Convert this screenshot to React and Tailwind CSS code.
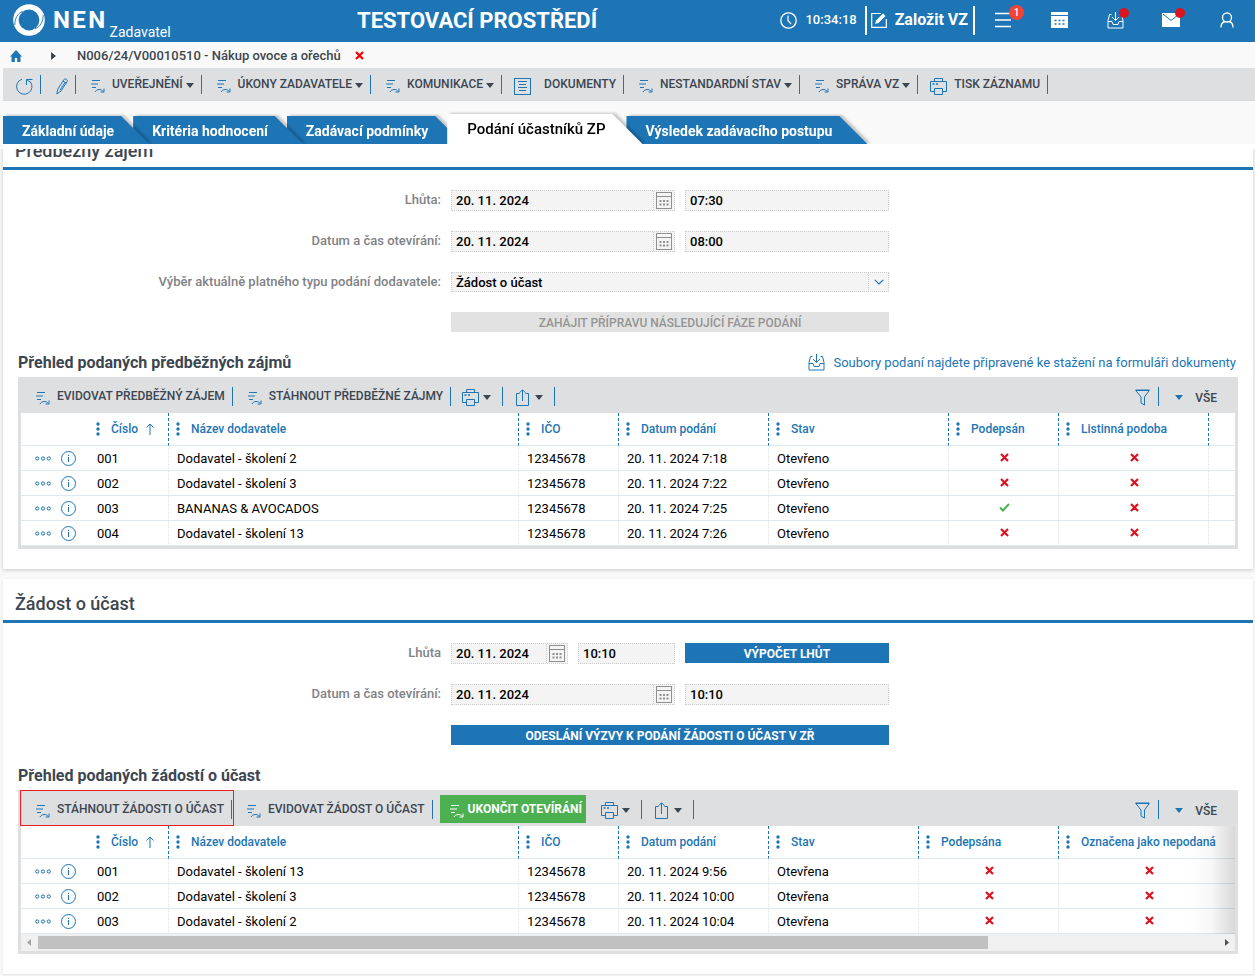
import { clsx } from 'clsx';

const stroke = { fill: 'none', stroke: 'currentColor' };

const Logo = () => (
  <svg className="w-8 h-8" viewBox="0 0 32 32">
    <circle cx="16" cy="16" r="15.8" fill="#fff" />
    <circle cx="16" cy="16" r="10.4" fill="#1d75b5" />
    <path d="M1.8 21C1.8 14.5 4.5 9.5 10 7" fill="none" stroke="#1d75b5" strokeWidth=".9" />
    <path d="M30.2 11C30.2 17.5 27.5 22.5 22 25" fill="none" stroke="#1d75b5" strokeWidth=".9" />
  </svg>
);

const ActionIcon = () => (
  <svg className="w-[14px] h-[14px] shrink-0" viewBox="0 0 14 14" {...stroke}>
    <path d="M1 1.5h8M0 5h7M1 8.5h4" />
    <path d="M4 13c1.5-3 6.5-3.4 8.2-.6" />
    <path d="M13 9.5v3.5H9.5" />
  </svg>
);

const PrinterIcon = () => (
  <svg className="w-[17px] h-[17px] shrink-0" viewBox="0 0 17 17" {...stroke}>
    <path d="M4.5 3.5v-3h8v3M4.5 13.5h-4v-10h16v10h-4" />
    <path d="M4.5 10.5h8v6h-8z" />
    <path d="M2.5 6h2M6 6h2" strokeWidth="1.6" />
  </svg>
);

const ShareIcon = () => (
  <svg className="w-[17px] h-[17px] shrink-0" viewBox="0 0 17 17" {...stroke}>
    <path d="M5.5 4.5h-3v12h12v-12h-3M8.5 12V1M5.5 3.8l3-3 3 3" />
  </svg>
);

const FilterIcon = () => (
  <svg className="w-[15px] h-[17px]" viewBox="0 0 15 17" {...stroke}>
    <path d="M.8 1.5h13.4L9.5 8v8L6 14V8z" />
    <path d="M.5 1h14" />
  </svg>
);

const RefreshIcon = () => (
  <svg className="w-[17px] h-[17px]" viewBox="0 0 17 17" {...stroke}>
    <path d="M6 1.2A7.7 7.7 0 1 0 14 3.4" />
    <path d="M16.500 1.500h-6V7M10.500 1.500l3.500 2.500" />
  </svg>
);

const PencilIcon = () => (
  <svg className="w-3 h-[17px]" viewBox="0 0 12 17" {...stroke}>
    <path d="M.8 16l1-5L8 1.5c1-1.4 4 .2 3.2 2L5 13z" />
    <path d="M9 4.5L4 12.2M7 3l3.2 2" />
  </svg>
);

const DocIcon = () => (
  <svg className="w-[17px] h-[17px] shrink-0" viewBox="0 0 17 17" {...stroke}>
    <rect x=".5" y=".5" width="16" height="16" />
    <path d="M4 3.5h9M5 6.5h7M4 9.5h9M5 12.5h7" />
  </svg>
);

const TrayIcon = () => (
  <svg className="w-[17px] h-[17px] shrink-0" viewBox="0 0 17 17" {...stroke}>
    <path d="M4.5 2.5h-2l-1.500 6v7.500h15V8.500l-1.500-6h-2" />
    <path d="M1 9.500h4l1 3h5l1-3h4" />
    <path d="M8.500 0v8M5 5l3.500 3.500L12 5" />
  </svg>
);

const CalendarIcon = () => (
  <svg className="w-4 h-[17px]" viewBox="0 0 16 17" {...stroke}>
    <rect x=".5" y=".5" width="15" height="16" />
    <path d="M0 4.500h16" />
    <path d="M3.500 9h9M3.500 12.500h9" strokeWidth="1.800" strokeDasharray="2 1.500" />
  </svg>
);

const Caret = ({ className = 'text-[#3c4650]' }) => (
  <svg className={clsx('w-2 h-[5px] shrink-0', className)} viewBox="0 0 8 5" fill="currentColor">
    <path d="M0 0h8L4 5z" />
  </svg>
);

const Cross = ({ className }) => (
  <svg className={clsx('w-[9px] h-[9px]', className)} viewBox="0 0 9 9" {...stroke}>
    <path d="M1 1l7 7M8 1L1 8" strokeWidth="2.200" />
  </svg>
);

const Check = ({ className }) => (
  <svg className={clsx('w-[11px] h-[9px]', className)} viewBox="0 0 11 9" {...stroke}>
    <path d="M1 4.500l3 3L10 1" strokeWidth="2" />
  </svg>
);

const Dots = () => (
  <svg className="w-1 h-[14px] shrink-0" viewBox="0 0 4 14" fill="currentColor">
    <circle cx="2" cy="2" r="1.700" />
    <circle cx="2" cy="7" r="1.700" />
    <circle cx="2" cy="12" r="1.700" />
  </svg>
);

const Separator = () => <span className="w-px h-[19px] bg-[#1d75b5]" />;

const ToolItem = ({ icon, label, caret, highlight, wide, labelGap = 'pl-[7px]' }) => (
  <div className="relative flex items-center h-full">
    <button
      className={clsx(
        'flex items-center h-full pr-[7px] text-[#1d75b5]',
        wide ? 'pl-3' : 'pl-[15px]'
      )}
      aria-label={label || 'Nástroj'}
    >
      <span className="pt-1">{icon}</span>
      {label && (
        <span className={clsx('text-xs font-medium text-[#3c4650] whitespace-nowrap', labelGap)}>
          {label}
        </span>
      )}
      {caret && <span className="pl-[3px] pt-[3px]"><Caret /></span>}
    </button>
    <Separator />
    {highlight && (
      <span className="absolute -top-[2px] bottom-0 -left-px -right-[2px] border border-[#ed1c24] pointer-events-none" />
    )}
  </div>
);

const IconTool = ({ icon, label, caret }) => (
  <div className="flex items-center h-full">
    <button className="flex items-center gap-1 h-full px-[11px] pt-[2px] text-[#1d75b5]" aria-label={label}>
      {icon}
      {caret && <Caret />}
    </button>
    <Separator />
  </div>
);

const Header = () => (
  <header className="flex items-center h-[42px] pb-[2px] bg-[#1d75b5] text-white">
    <a href="#" className="flex items-center w-[357px] h-full pl-[13px]">
      <Logo />
      <span className="pl-2 text-2xl font-bold tracking-widest">NEN</span>
      <span className="self-end pl-[2px] text-sm leading-4">Zadavatel</span>
    </a>
    <span className="text-[22px] font-bold whitespace-nowrap">TESTOVACÍ PROSTŘEDÍ</span>
    <div className="flex items-center ml-auto">
      <svg className="w-[17px] h-[17px]" viewBox="0 0 17 17" {...stroke}>
        <circle cx="8.500" cy="8.500" r="7.700" strokeWidth="1.300" />
        <path d="M8 3.500v5l3 3.500" strokeWidth="1.200" />
      </svg>
      <time className="px-2 text-[13px] font-medium">10:34:18</time>
      <button className="flex items-center h-[29px] pl-1 pr-[5px] gap-2 border-x-2 border-white text-base font-bold whitespace-nowrap">
        <svg className="w-4 h-4" viewBox="0 0 16 16" {...stroke}>
          <path d="M10 1.500H.7v13.800h14.600V7" strokeWidth="1.200" />
          <path d="M4 12l1-3.500L12 1.500l2.500 2.500-7 7z" fill="currentColor" stroke="none" />
        </svg>
        Založit VZ
      </button>
      <button className="relative flex justify-center w-14" aria-label="Menu">
        <svg className="w-4 h-4" viewBox="0 0 16 16" {...stroke}>
          <path d="M0 1.500h16M0 8h16M0 14.500h16" strokeWidth="1.500" />
        </svg>
        <span className="absolute -top-[7px] right-[7px] flex items-center justify-center w-[15px] h-[15px] rounded-full bg-[#f44336] text-[10px] font-medium">
          1
        </span>
      </button>
      <button className="flex justify-center w-14" aria-label="Kalendář">
        <svg className="w-[17px] h-4" viewBox="0 0 17 16">
          <path d="M0 0h17v3H0zM0 4h17v12H0z" fill="#fff" />
          <path d="M3.500 8.500h2M7.500 8.500h2M11.500 8.500h2M3.500 12h2M7.500 12h2M11.500 12h2" stroke="#1d75b5" strokeWidth="1.500" />
        </svg>
      </button>
      <button className="relative flex justify-center w-14" aria-label="Stažené soubory">
        <TrayIcon />
        <span className="absolute -top-1 right-[14px] w-[10px] h-[10px] rounded-full bg-[#d9141e]" />
      </button>
      <button className="relative flex justify-center w-14" aria-label="Zprávy">
        <svg className="w-[18px] h-[14px]" viewBox="0 0 18 14">
          <path d="M0 0h18v14H0z" fill="#fff" />
          <path d="M1 1l8 6.500L17 1" fill="none" stroke="#1d75b5" />
        </svg>
        <span className="absolute -top-[5px] right-[14px] w-[10px] h-[10px] rounded-full bg-[#d9141e]" />
      </button>
      <button className="flex justify-center w-14" aria-label="Uživatel">
        <svg className="w-[14px] h-4" viewBox="0 0 14 16" {...stroke}>
          <circle cx="7" cy="5.500" r="4.500" strokeWidth="1.300" />
          <path d="M1 15.500c0-3.500 1.800-5.500 4-6M13 15.500c0-3.500-1.800-5.500-4-6" strokeWidth="1.300" />
        </svg>
      </button>
    </div>
  </header>
);

const Breadcrumb = () => (
  <nav className="flex items-center h-[26px] pt-px pl-[10px] text-[13px] font-medium text-[#3c4650]">
    <a href="#" aria-label="Domů">
      <svg className="w-3 h-3 text-[#1d75b5]" viewBox="0 0 12 12" fill="currentColor">
        <path d="M6 0l6 6.500h-1.500V12H7.200V8H4.800v4H1.500V6.500H0z" />
      </svg>
    </a>
    <svg className="w-[5px] h-2 ml-[29px] mr-[21px]" viewBox="0 0 5 8" fill="currentColor">
      <path d="M0 0l5 4-5 4z" />
    </svg>
    <a href="#">N006/24/V00010510 - Nákup ovoce a ořechů</a>
    <button className="flex ml-[14px]" aria-label="Zavřít">
      <Cross className="text-[#fa0000]" />
    </button>
  </nav>
);

const MainToolbar = () => (
  <div className="flex items-center h-[33px] ml-[3px] pl-px bg-[#dedfe1] border-b border-[#d8d9db]">
    <ToolItem wide icon={<RefreshIcon />} />
    <ToolItem icon={<PencilIcon />} />
    <ToolItem icon={<ActionIcon />} label="UVEŘEJNĚNÍ" caret />
    <ToolItem icon={<ActionIcon />} label="ÚKONY ZADAVATELE" caret />
    <ToolItem icon={<ActionIcon />} label="KOMUNIKACE" caret />
    <ToolItem wide icon={<DocIcon />} label="DOKUMENTY" labelGap="pl-[13px]" />
    <ToolItem icon={<ActionIcon />} label="NESTANDARDNÍ STAV" caret />
    <ToolItem icon={<ActionIcon />} label="SPRÁVA VZ" caret />
    <ToolItem wide icon={<PrinterIcon />} label="TISK ZÁZNAMU" />
  </div>
);

const tabs = [
  { name: 'Základní údaje', layer: 'z-30' },
  { name: 'Kritéria hodnocení', layer: 'z-20' },
  { name: 'Zadávací podmínky', layer: 'z-10' },
  { name: 'Podání účastníků ZP', layer: 'z-40', active: true },
  { name: 'Výsledek zadávacího postupu', layer: 'z-0' },
];

const Tabs = () => (
  <div className="flex items-end h-[43px] pl-[3px] overflow-hidden" role="tablist">
    {tabs.map((tab) => (
      <button
        key={tab.name}
        role="tab"
        aria-selected={!!tab.active}
        className={clsx('relative -mr-4 drop-shadow-[3px_-1px_1px_rgba(0,0,0,0.2)]', tab.layer)}
      >
        <span
          className={clsx(
            'block whitespace-nowrap',
            tab.active
              ? 'h-[30px] pl-5 pr-[37px] bg-white text-black text-[15px] leading-[30px] font-medium [clip-path:polygon(0_0,calc(100%-30px)_0,100%_100%,0_100%)]'
              : 'h-7 pl-[19px] pr-[35px] bg-[#1d75b5] text-white text-sm leading-[31px] font-bold [clip-path:polygon(0_0,calc(100%-28px)_0,100%_100%,0_100%)]'
          )}
        >
          {tab.name}
        </span>
      </button>
    ))}
  </div>
);

const FormRow = ({ label, htmlFor, children }) => (
  <div className="flex">
    <label htmlFor={htmlFor} className="w-[438px] shrink-0 text-right text-[13px] leading-[19px] font-medium text-[#7f8286]">
      {label}
    </label>
    <div className="flex gap-[10px] w-[438px] ml-[10px]">{children}</div>
  </div>
);

const fieldBox = 'h-[21px] border border-dotted border-[#ccc] bg-[#f4f4f4] text-[13px] font-medium text-black';

const DateField = ({ id, value, label }) => (
  <div className={clsx('flex flex-1 min-w-0', fieldBox)}>
    <input id={id} aria-label={label} defaultValue={value} className="flex-1 min-w-0 pl-1 bg-transparent outline-none" />
    <button className="flex items-start pt-px pl-[2px] w-[21px] border-l border-dotted border-[#ccc] text-[#8f8f8f]" aria-label="Vybrat datum">
      <CalendarIcon />
    </button>
  </div>
);

const TimeField = ({ label, value, className = 'w-[204px]' }) => (
  <input aria-label={label} defaultValue={value} className={clsx('pl-1 outline-none', fieldBox, className)} />
);

const SectionHeading = ({ children }) => (
  <h2 className="h-11 pl-3 pt-1 border-b-[3px] border-[#1d75b5] text-lg leading-[41px] font-medium text-[#3c4650]">
    {children}
  </h2>
);

const GridToolbar = ({ children }) => (
  <div className="flex items-center h-9 pt-[2px]">
    {children}
    <IconTool icon={<PrinterIcon />} label="Tisk" caret />
    <IconTool icon={<ShareIcon />} label="Export" caret />
    <div className="flex items-center h-full ml-auto">
      <button className="pr-2 pt-[2px] text-[#1d75b5]" aria-label="Filtr">
        <FilterIcon />
      </button>
      <Separator />
      <button className="flex items-center gap-3 pl-[16px] pr-[18px] pt-[3px] text-xs font-medium text-[#3c4650]">
        <Caret className="text-[#1d75b5]" />
        VŠE
      </button>
    </div>
  </div>
);

const DataTable = ({ columns, rows, className }) => (
  <table className={clsx('table-fixed border-separate border-spacing-0 bg-white', className)}>
    <colgroup>
      <col className="w-[68px]" />
      {columns.map((col, i) => <col key={i} className={col.width} />)}
    </colgroup>
    <thead>
      <tr className="text-xs font-medium text-[#1d75b5]">
        <th className="h-[33px] p-0 border-b border-[#dfe9ef]" />
        {columns.map((col, i) => (
          <th
            key={i}
            className={clsx(
              'h-[33px] p-0 pl-[7px] font-medium border-b border-b-[#dfe9ef]',
              col.name && 'border-r border-r-[#1d75b5] [border-right-style:dashed]'
            )}
          >
            {col.name && (
              <span className="flex items-center gap-[11px] whitespace-nowrap">
                <Dots />
                {col.name}
                {col.sorted && (
                  <svg className="w-2 h-3 -ml-[3px]" viewBox="0 0 8 12" {...stroke}>
                    <path d="M4 12V1M.5 4.500L4 1l3.500 3.500" />
                  </svg>
                )}
              </span>
            )}
          </th>
        ))}
      </tr>
    </thead>
    <tbody>
      {rows.map((row) => (
        <tr key={row[0]} className="text-[13px] leading-5 text-black">
          <td className="h-[25px] p-0 border-b border-[#dfe9ef]">
            <div className="flex items-center gap-[10px] pl-[14px] text-[#1d75b5]">
              <button aria-label="Další akce">
                <svg className="w-4 h-[5px]" viewBox="0 0 16 5" {...stroke}>
                  <circle cx="2.200" cy="2.500" r="1.600" />
                  <circle cx="8" cy="2.500" r="1.600" />
                  <circle cx="13.800" cy="2.500" r="1.600" />
                </svg>
              </button>
              <button aria-label="Detail">
                <svg className="w-[15px] h-[15px]" viewBox="0 0 15 15" {...stroke}>
                  <circle cx="7.500" cy="7.500" r="7" />
                  <path d="M7.500 6v5M7.500 3.800v1.200" />
                </svg>
              </button>
            </div>
          </td>
          {columns.map((col, i) => (
            <td
              key={i}
              className={clsx(
                'h-[25px] border-b border-b-[#dfe9ef] whitespace-nowrap',
                col.name && 'border-r border-r-[#dfe3e6] [border-right-style:dotted]',
                col.flag ? 'p-0 pl-px pb-[2px]' : 'p-0 pl-2 pt-[2px]'
              )}
            >
              {col.flag
                ? (row[i]
                  ? <Check className="block mx-auto text-[#4caf50]" />
                  : <Cross className="block mx-auto text-[#d9141e]" />)
                : row[i]}
            </td>
          ))}
        </tr>
      ))}
    </tbody>
  </table>
);

const interestColumns = [
  { name: 'Číslo', width: 'w-[80px]', sorted: true },
  { name: 'Název dodavatele', width: 'w-[350px]' },
  { name: 'IČO', width: 'w-[100px]' },
  { name: 'Datum podání', width: 'w-[150px]' },
  { name: 'Stav', width: 'w-[180px]' },
  { name: 'Podepsán', width: 'w-[110px]', flag: true },
  { name: 'Listinná podoba', width: 'w-[150px]', flag: true },
  { name: '', width: 'w-auto' },
];

const interestRows = [
  ['001', 'Dodavatel - školení 2', '12345678', '20. 11. 2024 7:18', 'Otevřeno', false, false],
  ['002', 'Dodavatel - školení 3', '12345678', '20. 11. 2024 7:22', 'Otevřeno', false, false],
  ['003', 'BANANAS & AVOCADOS', '12345678', '20. 11. 2024 7:25', 'Otevřeno', true, false],
  ['004', 'Dodavatel - školení 13', '12345678', '20. 11. 2024 7:26', 'Otevřeno', false, false],
];

const requestColumns = [
  { name: 'Číslo', width: 'w-[80px]', sorted: true },
  { name: 'Název dodavatele', width: 'w-[350px]' },
  { name: 'IČO', width: 'w-[100px]' },
  { name: 'Datum podání', width: 'w-[150px]' },
  { name: 'Stav', width: 'w-[150px]' },
  { name: 'Podepsána', width: 'w-[140px]', flag: true },
  { name: 'Označena jako nepodaná', width: 'w-[180px]', flag: true },
];

const requestRows = [
  ['001', 'Dodavatel - školení 13', '12345678', '20. 11. 2024 9:56', 'Otevřena', false, false],
  ['002', 'Dodavatel - školení 3', '12345678', '20. 11. 2024 10:00', 'Otevřena', false, false],
  ['003', 'Dodavatel - školení 2', '12345678', '20. 11. 2024 10:04', 'Otevřena', false, false],
];

const InterestSection = () => (
  <section className="-mt-[23px] mr-[2px] pb-5 bg-white shadow-[0_1px_4px_rgba(0,0,0,0.2)]">
    <SectionHeading>Předběžný zájem</SectionHeading>
    <div className="flex flex-col gap-5 pt-5">
      <FormRow label="Lhůta:" htmlFor="interest-deadline">
        <DateField id="interest-deadline" value="20. 11. 2024" />
        <TimeField label="Lhůta, čas" value="07:30" />
      </FormRow>
      <FormRow label="Datum a čas otevírání:" htmlFor="interest-opening">
        <DateField id="interest-opening" value="20. 11. 2024" />
        <TimeField label="Čas otevírání" value="08:00" />
      </FormRow>
      <FormRow label="Výběr aktuálně platného typu podání dodavatele:" htmlFor="submission-type">
        <div className="relative flex-1 h-5">
          <select
            id="submission-type"
            className="block w-full h-5 pl-1 pt-px border border-dotted border-[#ccc] bg-[#f4f4f4] text-[13px] leading-[18px] font-medium text-black appearance-none"
          >
            <option>Žádost o účast</option>
          </select>
          <span className="absolute inset-y-0 right-0 flex items-center justify-center w-[21px] border-l border-dotted border-[#ccc] pointer-events-none">
            <svg className="w-[10px] h-[6px] text-[#1d75b5]" viewBox="0 0 10 6" {...stroke}>
              <path d="M.8 .8L5 5 9.200 .8" strokeWidth="1.200" />
            </svg>
          </span>
        </div>
      </FormRow>
      <button disabled className="w-[438px] h-5 pt-[2px] ml-[448px] bg-[#e2e2e2] text-xs font-medium text-[#949494]">
        ZAHÁJIT PŘÍPRAVU NÁSLEDUJÍCÍ FÁZE PODÁNÍ
      </button>
    </div>
    <div className="flex items-center justify-between h-5 mt-5 mb-[5px] pl-[15px] pr-[17px] pt-px">
      <h3 className="text-base font-bold text-[#3c4650]">Přehled podaných předběžných zájmů</h3>
      <a href="#" className="flex items-center gap-2 text-[13px] text-[#1d75b5]">
        <TrayIcon />
        Soubory podaní najdete připravené ke stažení na formuláři dokumenty
      </a>
    </div>
    <div className="mx-[15px] px-[3px] pb-[3px] bg-[#dedfe1]">
      <GridToolbar>
        <ToolItem icon={<ActionIcon />} label="EVIDOVAT PŘEDBĚŽNÝ ZÁJEM" />
        <ToolItem icon={<ActionIcon />} label="STÁHNOUT PŘEDBĚŽNÉ ZÁJMY" />
      </GridToolbar>
      <DataTable className="w-full" columns={interestColumns} rows={interestRows} />
    </div>
  </section>
);

const RequestSection = () => (
  <section className="mt-[10px] mr-[2px] pb-5 bg-white shadow-[0_1px_3px_rgba(0,0,0,0.1)]">
    <SectionHeading>Žádost o účast</SectionHeading>
    <div className="flex flex-col gap-5 pt-5">
      <FormRow label="Lhůta" htmlFor="request-deadline">
        <DateField id="request-deadline" value="20. 11. 2024" />
        <TimeField label="Lhůta, čas" value="10:10" className="w-[97px]" />
        <button className="w-[204px] h-5 pt-[2px] bg-[#1d75b5] text-xs font-bold text-white">VÝPOČET LHŮT</button>
      </FormRow>
      <FormRow label="Datum a čas otevírání:" htmlFor="request-opening">
        <DateField id="request-opening" value="20. 11. 2024" />
        <TimeField label="Čas otevírání" value="10:10" />
      </FormRow>
      <button className="w-[438px] h-5 pt-[2px] ml-[448px] bg-[#1d75b5] text-xs font-bold text-white">
        ODESLÁNÍ VÝZVY K PODÁNÍ ŽÁDOSTI O ÚČAST V ZŘ
      </button>
    </div>
    <div className="flex items-center h-5 mt-5 mb-[5px] pl-[15px] pt-px">
      <h3 className="text-base font-bold text-[#3c4650]">Přehled podaných žádostí o účast</h3>
    </div>
    <div className="mx-[15px] px-[3px] pb-[3px] bg-[#dedfe1]">
      <GridToolbar>
        <ToolItem highlight icon={<ActionIcon />} label="STÁHNOUT ŽÁDOSTI O ÚČAST" />
        <ToolItem icon={<ActionIcon />} label="EVIDOVAT ŽÁDOST O ÚČAST" />
        <button className="flex items-center gap-1 h-7 ml-[7px] mr-1 pl-[10px] pr-1 bg-[#4caf50] text-xs font-bold text-white whitespace-nowrap">
          <span className="pt-1"><ActionIcon /></span>
          UKONČIT OTEVÍRÁNÍ
        </button>
      </GridToolbar>
      <div className="relative overflow-hidden">
        <DataTable className="w-[1218px] min-w-full" columns={requestColumns} rows={requestRows} />
        <div className="absolute inset-y-0 right-0 w-12 bg-linear-to-r from-transparent via-black/3 to-black/15 pointer-events-none" />
      </div>
      <div className="flex items-center h-[17px] bg-[#f0f0f0]">
        <svg className="w-[17px] h-[7px] text-[#a3a3a3]" viewBox="0 0 17 7" fill="currentColor">
          <path d="M10 0v7L6 3.500z" />
        </svg>
        <div className="flex-1">
          <div className="w-[calc(81%-6px)] h-[13px] bg-[#c1c1c1]" />
        </div>
        <svg className="w-[17px] h-[7px] text-[#505050]" viewBox="0 0 17 7" fill="currentColor">
          <path d="M7 0v7l4-3.500z" />
        </svg>
      </div>
    </div>
  </section>
);

const App = () => (
  <div className="min-h-screen bg-[#f9f9f9] font-[Roboto,sans-serif]">
    <Header />
    <Breadcrumb />
    <MainToolbar />
    <Tabs />
    <div className="h-[5px] ml-[3px] bg-white" />
    <main className="pl-[3px] pb-[2px] overflow-hidden">
      <InterestSection />
      <RequestSection />
    </main>
  </div>
);

export default App;
